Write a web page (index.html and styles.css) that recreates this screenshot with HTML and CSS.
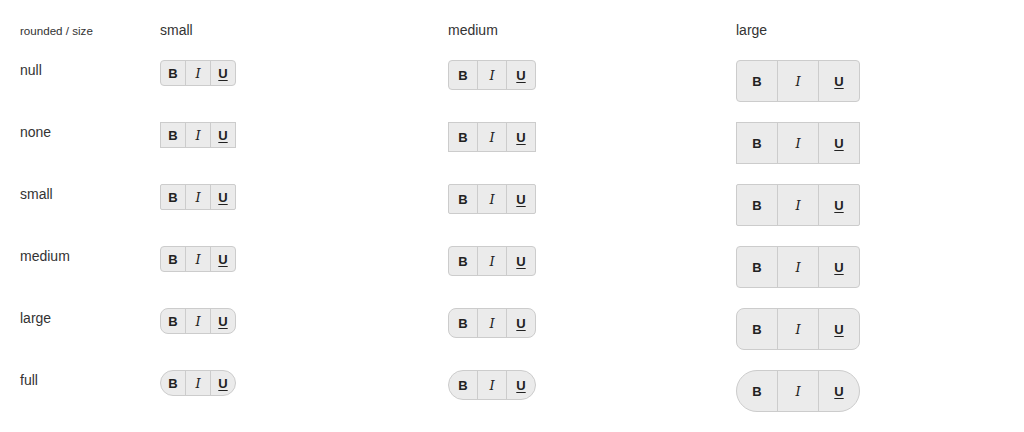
FILE: index.html
```html
<!DOCTYPE html>
<html>
<head>
<meta charset="utf-8">
<link rel="stylesheet" href="styles.css">
</head>
<body>
<div class="grid">
  <div class="head corner">rounded / size</div>
  <div class="head">small</div>
  <div class="head">medium</div>
  <div class="head">large</div>

  <div class="label">null</div>
  <div class="cell"><div class="group sz-s r-null"><span class="btn b">B</span><span class="btn i">I</span><span class="btn u">U</span></div></div>
  <div class="cell"><div class="group sz-m r-null"><span class="btn b">B</span><span class="btn i">I</span><span class="btn u">U</span></div></div>
  <div class="cell"><div class="group sz-l r-null"><span class="btn b">B</span><span class="btn i">I</span><span class="btn u">U</span></div></div>

  <div class="label">none</div>
  <div class="cell"><div class="group sz-s r-none"><span class="btn b">B</span><span class="btn i">I</span><span class="btn u">U</span></div></div>
  <div class="cell"><div class="group sz-m r-none"><span class="btn b">B</span><span class="btn i">I</span><span class="btn u">U</span></div></div>
  <div class="cell"><div class="group sz-l r-none"><span class="btn b">B</span><span class="btn i">I</span><span class="btn u">U</span></div></div>

  <div class="label">small</div>
  <div class="cell"><div class="group sz-s r-small"><span class="btn b">B</span><span class="btn i">I</span><span class="btn u">U</span></div></div>
  <div class="cell"><div class="group sz-m r-small"><span class="btn b">B</span><span class="btn i">I</span><span class="btn u">U</span></div></div>
  <div class="cell"><div class="group sz-l r-small"><span class="btn b">B</span><span class="btn i">I</span><span class="btn u">U</span></div></div>

  <div class="label">medium</div>
  <div class="cell"><div class="group sz-s r-medium"><span class="btn b">B</span><span class="btn i">I</span><span class="btn u">U</span></div></div>
  <div class="cell"><div class="group sz-m r-medium"><span class="btn b">B</span><span class="btn i">I</span><span class="btn u">U</span></div></div>
  <div class="cell"><div class="group sz-l r-medium"><span class="btn b">B</span><span class="btn i">I</span><span class="btn u">U</span></div></div>

  <div class="label">large</div>
  <div class="cell"><div class="group sz-s r-large"><span class="btn b">B</span><span class="btn i">I</span><span class="btn u">U</span></div></div>
  <div class="cell"><div class="group sz-m r-large"><span class="btn b">B</span><span class="btn i">I</span><span class="btn u">U</span></div></div>
  <div class="cell"><div class="group sz-l r-large"><span class="btn b">B</span><span class="btn i">I</span><span class="btn u">U</span></div></div>

  <div class="label">full</div>
  <div class="cell"><div class="group sz-s r-full"><span class="btn b">B</span><span class="btn i">I</span><span class="btn u">U</span></div></div>
  <div class="cell"><div class="group sz-m r-full"><span class="btn b">B</span><span class="btn i">I</span><span class="btn u">U</span></div></div>
  <div class="cell"><div class="group sz-l r-full"><span class="btn b">B</span><span class="btn i">I</span><span class="btn u">U</span></div></div>
</div>
</body>
</html>
```
FILE: styles.css
```css
html, body {
  margin: 0;
  padding: 0;
  background: #ffffff;
}
body {
  font-family: "Liberation Sans", Arial, sans-serif;
  color: #333333;
}
.grid {
  display: grid;
  grid-template-columns: 140px 288px 288px 268px;
  grid-template-rows: 20px repeat(6, 42px);
  row-gap: 20px;
  padding: 20px;
}
.head {
  font-size: 14px;
  line-height: 20px;
}
.head.corner {
  font-size: 11.6px;
  line-height: 22px;
}
.label {
  font-size: 14px;
  line-height: 20px;
}
.cell {
  display: flex;
  align-items: flex-start;
}
.group {
  display: inline-flex;
  border: 1px solid #cccccc;
  background: #ebebeb;
  overflow: hidden;
}
.btn {
  display: flex;
  align-items: center;
  justify-content: center;
  color: #222222;
  font-size: 13px;
}
.btn + .btn {
  border-left: 1px solid #cccccc;
}
.btn.b {
  font-weight: bold;
}
.btn.i {
  font-family: "DejaVu Serif", "Liberation Serif", serif;
  font-style: italic;
  font-size: 13px;
  color: #222222;
}
.btn.u {
  font-weight: bold;
  text-decoration: underline;
  text-underline-offset: 2px;
}
.sz-s .btn {
  width: 24px;
  height: 24px;
}
.sz-m .btn {
  width: 28px;
  height: 28px;
}
.sz-l .btn {
  width: 40px;
  height: 40px;
}
.r-null { border-radius: 4px; }
.r-none { border-radius: 0; }
.r-small { border-radius: 2px; }
.r-medium { border-radius: 4px; }
.r-large { border-radius: 8px; }
.r-full { border-radius: 9999px; }
```
